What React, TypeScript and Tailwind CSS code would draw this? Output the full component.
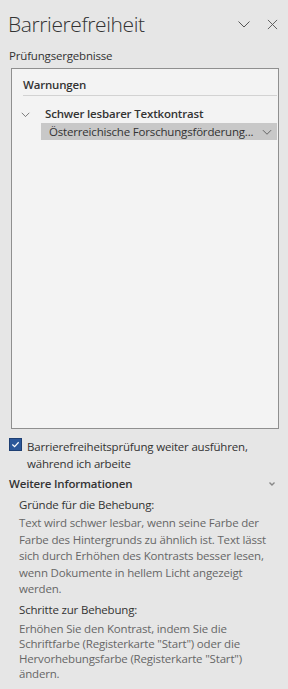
import React from "react";

const ChevronDown = ({ className = "" }: { className?: string }) => (
  <svg viewBox="0 0 16 16" className={className} fill="none" stroke="currentColor" strokeWidth="1">
    <path d="M2.5 5.5 L8 11 L13.5 5.5" />
  </svg>
);

const App: React.FC = () => {
  return (
    <div
      className="w-[288px] h-[689px] overflow-hidden bg-[#e6e6e6] text-[#444] text-[11.5px] tracking-[-0.18px]"
      style={{ fontFamily: '"Segoe UI", "Open Sans", "Noto Sans", sans-serif' }}
    >
      {/* header */}
      <div className="flex items-center h-[46px] pl-[8px] pr-[10px] pt-[2px]">
        <h1 className="flex-1 text-[21px] font-light text-[#333] leading-none tracking-[-0.4px]">Barrierefreiheit</h1>
        <ChevronDown className="w-[16px] h-[16px] text-[#555] mr-[15px]" />
        <svg viewBox="0 0 12 12" className="w-[11px] h-[11px] text-[#555]" stroke="currentColor" strokeWidth="1">
          <path d="M1 1 L11 11 M11 1 L1 11" />
        </svg>
      </div>

      <div className="pl-[9px] h-[20px] leading-[20px] text-[#333]">Prüfungsergebnisse</div>

      {/* results box */}
      <div className="mx-[11px] mt-[2px] w-[268px] h-[361px] border border-[#8f8f8f] bg-[#f3f3f3]">
        <div className="pl-[11px] pt-[7px] h-[26px] font-semibold text-[#333] leading-[18px]">Warnungen</div>
        <div className="ml-[11px] mr-[1px] border-t border-[#d2d2d2]" />
        <div className="mt-[9px] flex items-center h-[18px]">
          <ChevronDown className="ml-[8px] w-[11px] h-[11px] text-[#444]" />
          <span className="ml-[14px] font-semibold text-[#333]">Schwer lesbarer Textkontrast</span>
        </div>
        <div className="ml-[29px] mr-[1px] h-[17px] bg-[#c8c8c8] flex items-center pl-[8px] pr-[4px] text-[#333]">
          <span className="flex-1 whitespace-nowrap overflow-hidden">Österreichische Forschungsförderung...</span>
          <ChevronDown className="w-[12px] h-[12px] text-[#444] shrink-0" />
        </div>
      </div>

      {/* checkbox */}
      <div className="flex mt-[9px] pl-[9px]">
        <div className="w-[13px] h-[13px] bg-[#2b579a] border border-[#1e3f73] flex items-center justify-center shrink-0">
          <svg viewBox="0 0 10 10" className="w-[9px] h-[9px]" fill="none" stroke="#fff" strokeWidth="1.3">
            <path d="M1.5 5 L4 7.5 L8.5 2.5" />
          </svg>
        </div>
        <div className="ml-[5px] leading-[17px] text-[#333]">
          Barrierefreiheitsprüfung weiter ausführen,<br />während ich arbeite
        </div>
      </div>

      {/* more info */}
      <div className="flex items-center justify-between pl-[9px] pr-[12px] mt-[1px] h-[22px]">
        <span className="font-semibold text-[#333]">Weitere Informationen</span>
        <svg viewBox="0 0 8 8" className="w-[8px] h-[8px] text-[#888]" fill="none" stroke="currentColor" strokeWidth="1.4">
          <path d="M1.5 2.5 L4 5 L6.5 2.5" />
        </svg>
      </div>

      <div className="pl-[19px] pr-[8px] mt-[1px]">
        <div className="text-[#333] leading-[18px]">Gründe für die Behebung:</div>
        <p className="text-[#666] leading-[16.5px] mt-[1px]">
          Text wird schwer lesbar, wenn seine Farbe der Farbe des Hintergrunds zu ähnlich ist. Text lässt sich durch Erhöhen des Kontrasts besser lesen, wenn Dokumente in hellem Licht angezeigt werden.
        </p>
        <div className="text-[#333] leading-[18px] mt-[3px]">Schritte zur Behebung:</div>
        <p className="text-[#666] leading-[15px] mt-[2px]">
          Erhöhen Sie den Kontrast, indem Sie die Schriftfarbe (Registerkarte "Start") oder die Hervorhebungsfarbe (Registerkarte "Start") ändern.
        </p>
      </div>
    </div>
  );
};

export default App;
